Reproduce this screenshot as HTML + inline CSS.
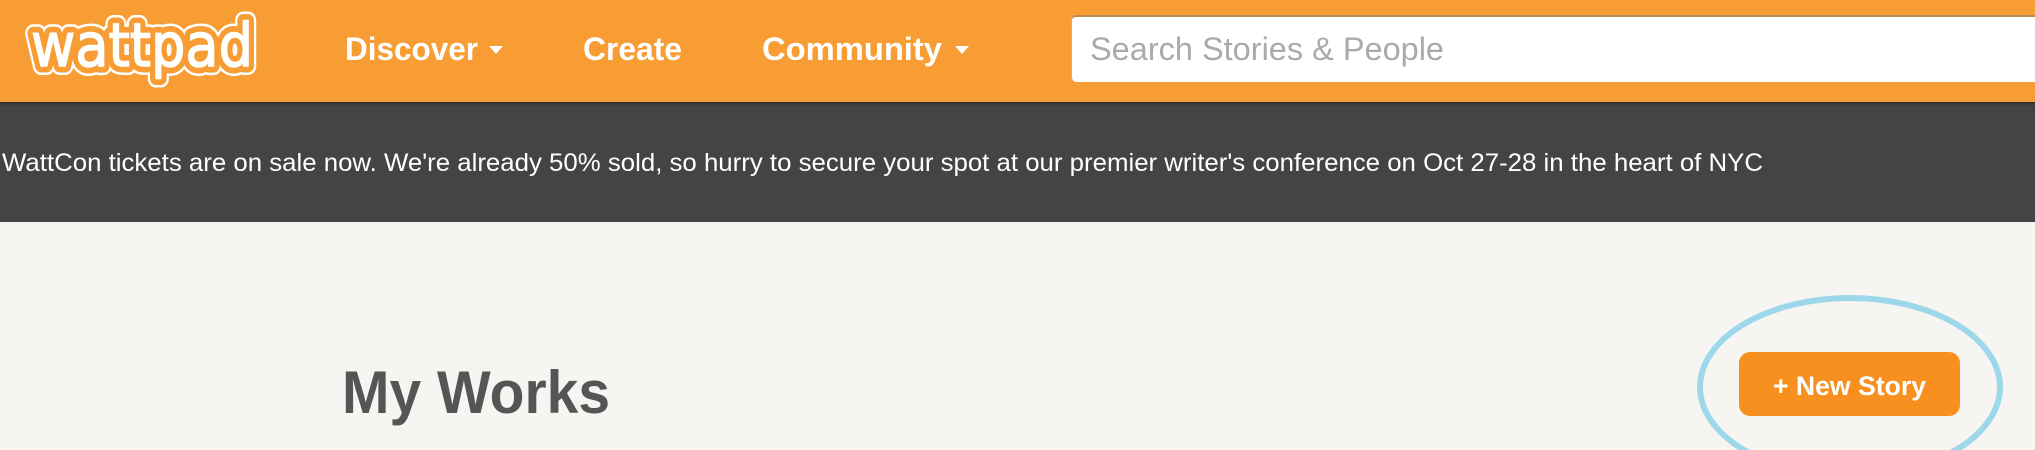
<!DOCTYPE html>
<html><head><meta charset="utf-8"><style>
*{margin:0;padding:0;box-sizing:border-box}
html{width:2035px;height:450px;overflow:hidden}
body{width:2035px;height:450px;overflow:hidden;background:#f6f5f1;font-family:"Liberation Sans",sans-serif;position:relative}
.hdr{position:absolute;left:0;top:0;width:2035px;height:102px;background:#f89c34;box-shadow:0 2px 3px rgba(0,0,0,.35);z-index:2}
.ban{position:absolute;left:0;top:102px;width:2035px;height:120px;background:#444;overflow:hidden}
svg{position:absolute;left:0;top:0;display:block}
.search{position:absolute;left:1071px;top:15px;width:964px;height:67px;background:#fff;border-radius:5px 0 0 5px;border-top:2px solid #b98a55;border-left:1px solid #d9b080;overflow:hidden}
.btn{position:absolute;left:1739px;top:352px;width:221px;height:64px;background:#f7901e;border-radius:11px}
.layer{position:absolute;left:0;top:0;width:2035px;height:450px;overflow:hidden}
</style></head><body>
<div class="hdr">
<svg width="1070" height="102">
<g font-family="DejaVu Sans" font-size="60">
<text x="31" y="66" textLength="222" lengthAdjust="spacingAndGlyphs" fill="none" stroke="#fff" stroke-width="18" stroke-linejoin="round">wattpad</text>
<text x="31" y="66" textLength="222" lengthAdjust="spacingAndGlyphs" fill="none" stroke="#f89c34" stroke-width="13" stroke-linejoin="round">wattpad</text>
<text x="31" y="66" textLength="222" lengthAdjust="spacingAndGlyphs" fill="#fff" stroke="#fff" stroke-width="1.5">wattpad</text>
</g>
<g font-family="Liberation Sans" font-weight="bold" font-size="32" fill="#fff">
<text x="345" y="60" textLength="133" lengthAdjust="spacingAndGlyphs">Discover</text>
<text x="583" y="60" textLength="99" lengthAdjust="spacingAndGlyphs">Create</text>
<text x="762" y="60" textLength="180" lengthAdjust="spacingAndGlyphs">Community</text>
</g>
<path d="M489 46h14l-7 8z M955 46h14l-7 8z" fill="#fff"/>
</svg>
<div class="search"><svg width="600" height="65"><text x="18" y="43" font-family="Liberation Sans" font-size="32" fill="#aaa" textLength="354" lengthAdjust="spacingAndGlyphs">Search Stories &amp; People</text></svg></div>
</div>
<div class="ban"><svg width="2035" height="120"><text x="2" y="69" font-family="Liberation Sans" font-size="25" fill="#fff" textLength="1761" lengthAdjust="spacingAndGlyphs">WattCon tickets are on sale now. We're already 50% sold, so hurry to secure your spot at our premier writer's conference on Oct 27-28 in the heart of NYC</text></svg></div>
<div class="layer">
<svg width="2035" height="450">
<text x="342" y="413" font-family="Liberation Sans" font-weight="bold" font-size="60" fill="#555" textLength="268" lengthAdjust="spacingAndGlyphs">My Works</text>
</svg>
<div class="btn"><svg width="221" height="64"><text x="34" y="43" font-family="Liberation Sans" font-weight="bold" font-size="27" fill="#fff" textLength="153" lengthAdjust="spacingAndGlyphs">+ New Story</text></svg></div>
<svg width="2035" height="450"><ellipse cx="1850" cy="387" rx="150" ry="89" fill="none" stroke="#9dd7ea" stroke-width="6"/></svg>
</div>
</body></html>
